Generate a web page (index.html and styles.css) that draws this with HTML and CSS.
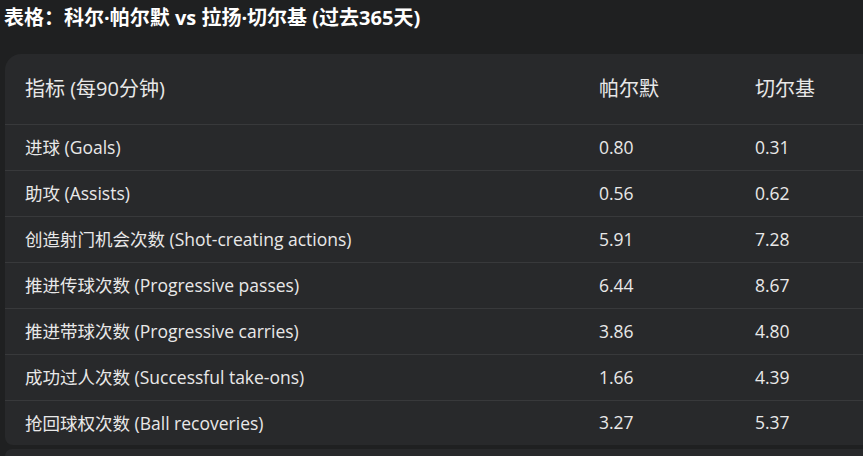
FILE: index.html
```html
<!DOCTYPE html>
<html lang="zh">
<head>
<meta charset="utf-8">
<link rel="stylesheet" href="styles.css">
</head>
<body>
<h1 class="title">表格：科尔·帕尔默 vs 拉扬·切尔基 (过去365天)</h1>
<div class="card">
  <div class="row head">
    <div class="cell">指标 (每90分钟)</div>
    <div class="cell">帕尔默</div>
    <div class="cell">切尔基</div>
  </div>
  <div class="row"><div class="cell">进球 (Goals)</div><div class="cell">0.80</div><div class="cell">0.31</div></div>
  <div class="row"><div class="cell">助攻 (Assists)</div><div class="cell">0.56</div><div class="cell">0.62</div></div>
  <div class="row"><div class="cell">创造射门机会次数 (Shot-creating actions)</div><div class="cell">5.91</div><div class="cell">7.28</div></div>
  <div class="row"><div class="cell">推进传球次数 (Progressive passes)</div><div class="cell">6.44</div><div class="cell">8.67</div></div>
  <div class="row"><div class="cell">推进带球次数 (Progressive carries)</div><div class="cell">3.86</div><div class="cell">4.80</div></div>
  <div class="row"><div class="cell">成功过人次数 (Successful take-ons)</div><div class="cell">1.66</div><div class="cell">4.39</div></div>
  <div class="row"><div class="cell">抢回球权次数 (Ball recoveries)</div><div class="cell">3.27</div><div class="cell">5.37</div></div>
</div>
<div class="card next"></div>
</body>
</html>
```

FILE: styles.css
```css
html, body {
  margin: 0;
  padding: 0;
  background: #1f2021;
  overflow: hidden;
}
body {
  width: 863px;
  height: 456px;
  font-family: "Open Sans", "Noto Sans CJK SC", sans-serif;
  color: #e8e8e8;
}
.title {
  margin: 0;
  padding: 5px 0 0 4px;
  font-size: 20px;
  line-height: 26px;
  font-weight: 700;
  color: #ffffff;
  height: 54px;
  box-sizing: border-box;
  white-space: nowrap;
}
.card {
  margin-left: 5px;
  width: 900px;
  background: #28292b;
  border-radius: 16px 0 0 8px;
}
.row {
  display: grid;
  grid-template-columns: 574px 156px 170px;
  height: 46px;
  align-items: center;
  border-top: 1px solid #38393b;
  box-sizing: border-box;
  font-size: 17.5px;
  padding-bottom: 2px;
}
.row.head {
  height: 70px;
  border-top: none;
  font-size: 20px;
  padding-bottom: 3px;
}
.cell {
  padding-left: 20px;
  white-space: nowrap;
}
.row:last-child {
  height: 45px;
}
.next {
  margin-top: 4px;
  height: 7px;
  border-radius: 8px 0 0 0;
}
```
